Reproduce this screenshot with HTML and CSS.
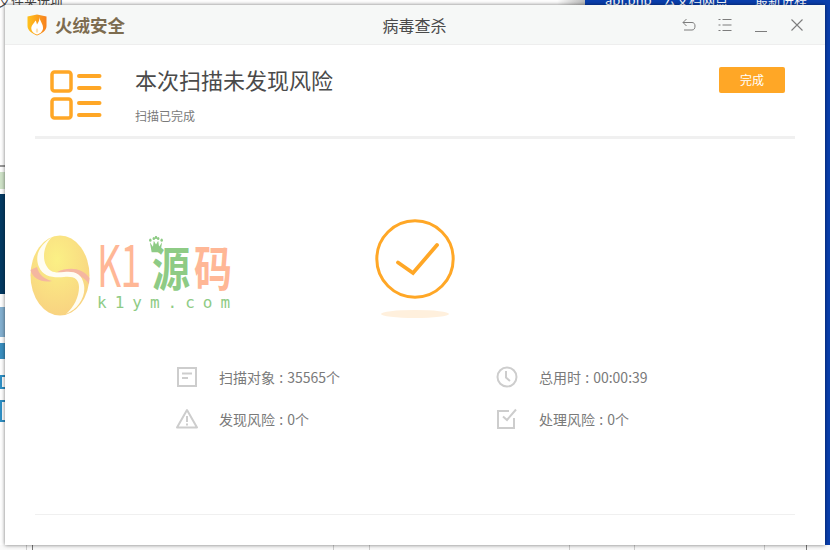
FILE: index.html
```html
<!DOCTYPE html>
<html lang="zh-CN">
<head>
<meta charset="utf-8">
<title>病毒查杀</title>
<link rel="stylesheet" href="styles.css">
</head>
<body>
<div class="desktop">
  <div class="bg-top-left">文件夹选项</div>
  <div class="bg-fade"></div>
  <div class="bg-blue">
    <span class="bg-label bg-l1">api.php</span>
    <span class="bg-label bg-l2">云文档网点</span>
    <span class="bg-label bg-l3">最新进程</span>
  </div>
  <div class="bg-strip bg-s0"></div>
  <div class="bg-strip bg-s1"></div>
  <div class="bg-strip bg-s2"></div>
  <div class="bg-strip bg-s3"></div>
  <div class="bg-strip bg-s4"></div>
  <div class="bg-strip bg-s5"></div>
  <div class="bg-strip bg-s6"></div>
  <div class="bg-bottom"><i class="t1"></i><i class="t2"></i><i class="t3"></i><i class="t4"></i><i class="t5"></i><i class="t6"></i><i class="t7"></i><i class="t8"></i></div>

  <main class="window">
    <header class="titlebar">
      <div class="brand">
        <svg class="brand-icon" width="20" height="22" viewBox="0 0 20 22">
          <defs>
            <linearGradient id="sh" x1="0" y1="0" x2="1" y2="0">
              <stop offset="0" stop-color="#ffc21c"/>
              <stop offset="1" stop-color="#f7801e"/>
            </linearGradient>
          </defs>
          <path d="M10 0.500 L19.500 2.500 V12 C19.500 16.500 15 19.500 10 21.500 C5 19.500 0.500 16.500 0.500 12 V2.500 Z" fill="url(#sh)"/>
          <path d="M12.500 2.500 C12.500 7 16.500 10 16 14.500 C15.500 18 12.500 20 10 20.500 C6.500 19.500 4 17 4.300 13.500 C4.500 11 7.500 9 8.500 6.500 C9.500 8 9.800 9.500 10 10.500 C11.500 8.500 12.800 5.500 12.500 2.500 Z" fill="#fff"/>
          <path d="M10 14 C11.500 15.500 11.800 18 10 19 C8.200 18 8.500 15.500 10 14 Z" fill="#fde0b0"/>
        </svg>
        <span class="brand-name">火绒安全</span>
      </div>
      <h1 class="wintitle">病毒查杀</h1>
      <div class="controls">
        <svg width="14" height="14" viewBox="0 0 14 14" class="ctl"><path d="M4.500 1 L1 4.500 L4.500 8 M1 4.500 H10 C12 4.500 13 6 13 8 C13 10.500 12 12 10 12 H2" fill="none" stroke="#7d7d7d" stroke-width="1"/></svg>
        <svg width="14" height="14" viewBox="0 0 14 14" class="ctl"><path d="M0.500 1.500 H2.500 M4.500 1.500 H13.500 M0.500 7 H2.500 M4.500 7 H13.500 M0.500 12.500 H2.500 M4.500 12.500 H13.500" fill="none" stroke="#7d7d7d" stroke-width="1"/></svg>
        <svg width="14" height="14" viewBox="0 0 14 14" class="ctl"><path d="M1 13.500 H13" fill="none" stroke="#7d7d7d" stroke-width="1"/></svg>
        <svg width="14" height="14" viewBox="0 0 14 14" class="ctl"><path d="M1.500 1.500 L12.500 12.500 M12.500 1.500 L1.500 12.500" fill="none" stroke="#7d7d7d" stroke-width="1.100"/></svg>
      </div>
    </header>

    <div class="content">
      <section class="summary">
        <svg class="summary-icon" width="52" height="50" viewBox="0 0 52 50">
          <g fill="none" stroke="#ffa726" stroke-width="3.500">
            <rect x="2" y="2" width="19" height="19" rx="2.500"/>
            <rect x="2" y="29" width="19" height="19" rx="2.500"/>
          </g>
          <g fill="none" stroke="#ffa726" stroke-width="4" stroke-linecap="round">
            <path d="M29 6 H49.500 M29 18 H49.500 M29 33 H49.500 M29 45 H49.500"/>
          </g>
        </svg>
        <div class="summary-text">
          <h2 class="headline">本次扫描未发现风险</h2>
          <p class="subline">扫描已完成</p>
        </div>
        <button class="done" type="button">完成</button>
      </section>

      <section class="result">
        <svg class="badge" width="82" height="102" viewBox="0 0 82 102">
          <circle cx="41" cy="40" r="38.200" fill="none" stroke="#ffa726" stroke-width="3"/>
          <path d="M24 43.500 L39 54 L63 26" fill="none" stroke="#ffa726" stroke-width="3.800" stroke-linecap="round" stroke-linejoin="miter"/>
          <ellipse cx="41" cy="95" rx="34" ry="4" fill="#fff0dd"/>
        </svg>
      </section>

      <section class="stats">
        <div class="stat">
          <svg width="22" height="22" viewBox="0 0 22 22"><g fill="none" stroke="#cdcdcd" stroke-width="2"><rect x="2" y="2" width="18" height="18"/><path d="M6 7.500 H16 M6 12 H12"/></g></svg>
          <span>扫描对象 : 35565个</span>
        </div>
        <div class="stat">
          <svg width="22" height="22" viewBox="0 0 22 22"><g fill="none" stroke="#cdcdcd" stroke-width="2"><circle cx="11" cy="11" r="9.500"/><path d="M10 5 V11.500 L14 15"/></g></svg>
          <span>总用时 : 00:00:39</span>
        </div>
        <div class="stat">
          <svg width="22" height="22" viewBox="0 0 22 22"><g fill="none" stroke="#cdcdcd" stroke-width="2" stroke-linejoin="round"><path d="M11 2 L21 19.500 H1 Z"/><path d="M11 8 V14 M11 15.500 V17.500"/></g></svg>
          <span>发现风险 : 0个</span>
        </div>
        <div class="stat">
          <svg width="22" height="22" viewBox="0 0 22 22"><g fill="none" stroke="#cdcdcd" stroke-width="2"><path d="M18 10 V20 H2 V3 H13"/><path d="M7 8.500 L11 12 L20 1.500"/></g></svg>
          <span>处理风险 : 0个</span>
        </div>
      </section>

      <div class="footer-rule"></div>
    </div>

    <aside class="watermark">
      <svg class="wm-egg" width="60" height="81" viewBox="0 0 60 81">
        <defs>
          <radialGradient id="egg" cx="0.45" cy="0.3" r="0.8">
            <stop offset="0" stop-color="#fbf085"/>
            <stop offset="1" stop-color="#f8cf80"/>
          </radialGradient>
        </defs>
        <ellipse cx="30" cy="40.500" rx="29.500" ry="40" fill="url(#egg)"/>
        <path d="M0.500 35 C3 44 12 48 22 46 C14 44 9 40 7 32 C5 33 2 34 0.500 35 Z" fill="#f5b7a0"/>
        <path d="M27 37 C38 32 52 32 59.500 43 L59 49 C54 42 48 39 38 39 Z" fill="#f5b7a0"/>
        <path d="M22 2 C10 10 4 20 9 32 C13 42 24 43 34 42 C44 41 49 44 49 52 C49 62 44 72 36 79 C48 74 56 62 54 50 C52 38 44 36 34 37 C26 38 20 38 16 30 C12 22 14 10 22 2 Z" fill="#fffdf2"/>
      </svg>
      <div class="wm-text">
        <div class="wm-big">
          <span class="wm-k">K1</span>
          <span class="wm-yuan">源<svg class="wm-crown" width="16" height="14" viewBox="0 0 16 16"><path d="M1 6 L4.500 10 L5.500 4.500 L8 8 L10.500 4.500 L11.500 10 L15 6 L13 15 H3 Z" fill="#8ecb85"/><circle cx="1.500" cy="4" r="1.400" fill="#8ecb85"/><circle cx="5.500" cy="2.500" r="1.400" fill="#8ecb85"/><circle cx="8" cy="1.500" r="1.400" fill="#8ecb85"/><circle cx="10.500" cy="2.500" r="1.400" fill="#8ecb85"/><circle cx="14.500" cy="4" r="1.400" fill="#8ecb85"/></svg></span>
          <span class="wm-ma">码</span>
        </div>
        <div class="wm-url">k1ym.com</div>
      </div>
    </aside>
  </main>
</div>
</body>
</html>
```
FILE: styles.css
```css
* { box-sizing: border-box; }
html, body { margin: 0; padding: 0; }
body { width: 830px; height: 550px; overflow: hidden; background: #fff; font-family: "Noto Sans CJK SC", "Liberation Sans", sans-serif; }

.desktop { position: relative; width: 830px; height: 550px; overflow: hidden; background: #fff; }

/* What lies behind the window */
.bg-top-left { position: absolute; left: -2px; top: -8px; font-size: 13px; line-height: 18px; color: #444; }
.bg-fade { position: absolute; left: 400px; top: 0; width: 185px; height: 5px; background: linear-gradient(90deg, #fff 0, #fff 85%, #bbb 100%); }
.bg-blue { position: absolute; left: 585px; top: 0; width: 245px; height: 550px; background: #0a3fae; }
.bg-label { position: absolute; top: -9px; font-size: 13px; line-height: 18px; color: #fff; }
.bg-l1 { left: 20px; }
.bg-l2 { left: 78px; }
.bg-l3 { left: 170px; }
.bg-strip { position: absolute; left: 0; width: 5px; }
.bg-s0 { top: 165px; height: 2px; background: #999; }
.bg-s1 { top: 172px; height: 17px; background: #cfe3c8; }
.bg-s2 { top: 194px; height: 100px; background: #043a63; }
.bg-s3 { top: 307px; height: 30px; background: #84b0d0; }
.bg-s4 { top: 343px; height: 16px; background: #3a8fc0; }
.bg-s5 { top: 375px; height: 14px; border: 2px solid #2f8fc4; border-right: 0; }
.bg-s6 { top: 400px; height: 22px; border: 2px solid #2f8fc4; border-right: 0; }
.bg-bottom { position: absolute; left: 0; top: 545px; width: 830px; height: 5px; background: #fafafa; }
.bg-bottom i { position: absolute; top: 0; width: 1px; height: 5px; background: #ccc; }
.bg-bottom .t1 { left: 26px; }
.bg-bottom .t2 { left: 32px; background: #777; }
.bg-bottom .t3 { left: 333px; }
.bg-bottom .t4 { left: 369px; }
.bg-bottom .t5 { left: 569px; }
.bg-bottom .t6 { left: 634px; }
.bg-bottom .t7 { left: 764px; }
.bg-bottom .t8 { left: 806px; background: #777; }

/* Window */
.window { position: absolute; left: 5px; top: 5px; width: 820px; height: 540px; background: #fff; display: flex; flex-direction: column; box-shadow: 0 0 4px rgba(0,0,0,.55); }

.titlebar { height: 40px; flex: none; display: grid; grid-template-columns: 1fr auto 1fr; align-items: center; background: #f6f8f7; border-bottom: 1px solid #eeeeee; padding: 0 21px 0 22px; }
.brand { display: flex; align-items: center; gap: 8px; }
.brand-name { font-size: 17.500px; line-height: 22px; font-weight: 700; color: #7d6c4f; }
.wintitle { margin: 0 2px 0 0; font-size: 16px; line-height: 22px; font-weight: 400; color: #4a4a4a; }
.controls { display: flex; justify-content: flex-end; gap: 22px; }

.content { flex: 1; display: flex; flex-direction: column; padding: 0 30px; }

.summary { height: 94px; flex: none; display: flex; align-items: flex-start; border-bottom: 3px solid #f0f0f0; }
.summary-icon { margin: 25px 0 0 15px; flex: none; }
.summary-text { margin-left: 33px; flex: 1; padding-top: 18px; }
.headline { margin: 0; font-size: 22px; line-height: 32px; font-weight: 400; color: #4a4a4a; }
.subline { margin: 12px 0 0; font-size: 12px; line-height: 18px; color: #7a7a7a; }
.done { margin: 22px 10px 0 0; width: 66px; height: 26px; border: 0; border-radius: 2px; background: #ffa726; color: #fff; font: 12px/26px "Noto Sans CJK SC", sans-serif; padding: 0; }

.result { display: flex; justify-content: center; padding-top: 80px; }
.badge { flex: none; }

.stats { margin: 45px 0 0 141px; display: grid; grid-template-columns: 320px 200px; row-gap: 20px; }
.stat { display: flex; align-items: center; gap: 21px; height: 22px; font-size: 14px; line-height: 22px; word-spacing: 1px; color: #7a7a7a; }
.stat svg { flex: none; }

.footer-rule { margin-top: auto; margin-bottom: 30px; height: 1px; background: #f0f0f0; }

/* Watermark laid over the content */
.watermark { position: absolute; left: 25px; top: 230px; display: flex; align-items: flex-start; gap: 9px; }
.wm-text { margin-top: 7px; }
.wm-big { display: flex; align-items: flex-start; height: 48px; }
.wm-k { width: 44px; height: 34px; flex: none; display: block; font-size: 52px; line-height: 34px; font-weight: 400; white-space: nowrap; color: #ffb796; letter-spacing: -1px; transform-origin: 0 0; transform: translate(-2px, 2px) scale(.72, 1.1); }
.wm-yuan { width: 38px; height: 38px; margin-left: 9px; flex: none; display: block; position: relative; font-size: 38px; line-height: 38px; font-weight: 700; color: #8ecb85; transform-origin: 0 0; transform: scaleY(1.25); }
.wm-ma { width: 38px; height: 38px; margin-left: 4px; flex: none; display: block; font-size: 38px; line-height: 38px; font-weight: 700; color: #ffb796; transform-origin: 0 0; transform: scaleY(1.25); }
.wm-crown { position: absolute; left: -4px; top: -5px; }
.wm-url { margin-top: 3px; margin-left: -2px; font-family: "DejaVu Sans Mono", monospace; font-size: 16px; line-height: 20px; letter-spacing: 8px; color: #8ecb85; }
```
